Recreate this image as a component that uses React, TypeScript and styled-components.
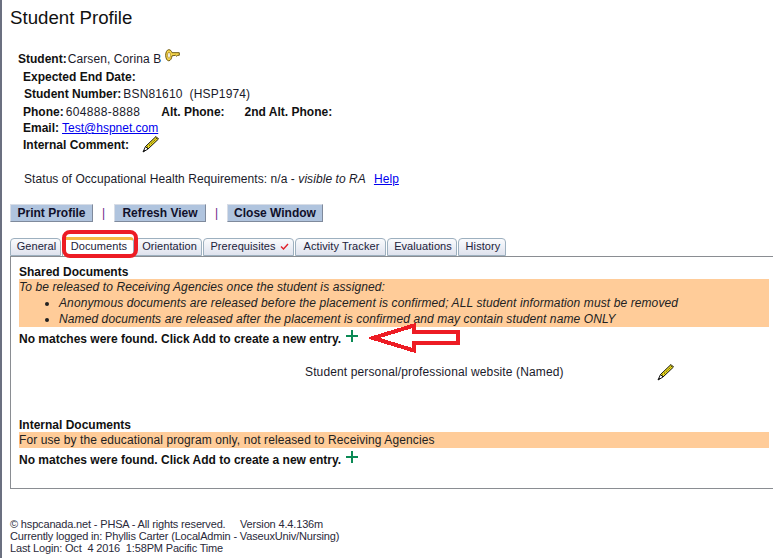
import React from 'react';
import styled, { createGlobalStyle } from 'styled-components';

const GlobalStyle = createGlobalStyle`
  html, body {
    margin: 0;
    padding: 0;
    background: #fff;
    overflow: hidden;
  }
  body {
    font-family: "Liberation Sans", Arial, sans-serif;
    font-size: 12px;
    color: #1a1a2a;
  }
`;

const Page = styled.div`
  width: 773px;
  height: 558px;
  border-left: 2px solid #6b7080;
  padding-left: 8px;
  box-sizing: border-box;
  overflow: hidden;
`;

const Title = styled.h1`
  margin: 0;
  padding-top: 7px;
  height: 36px;
  font-size: 18.67px;
  line-height: 21px;
  font-weight: 400;
  color: #111;
`;

const Info = styled.div`
  padding-top: 7px;
  display: flex;
  flex-direction: column;
`;

const InfoRow = styled.div<{ $indent: number; $height: number }>`
  height: ${(p) => p.$height}px;
  line-height: ${(p) => p.$height}px;
  padding-left: ${(p) => p.$indent}px;
  white-space: nowrap;
  display: flex;
  align-items: center;
`;

const Label = styled.b<{ $gap?: number; $after?: number }>`
  font-weight: 700;
  color: #111;
  margin-left: ${(p) => p.$gap ?? 0}px;
  margin-right: ${(p) => p.$after ?? 2}px;
`;

const Value = styled.span<{ $spacing: number }>`
  letter-spacing: ${(p) => p.$spacing}px;
`;

const Link = styled.a`
  color: #0000ee;
  text-decoration: underline;
`;

const KeySlot = styled.span`
  display: flex;
  margin: -9px 0 0 4px;
`;

const CommentPencil = styled.span`
  display: flex;
  margin: -2px 0 0 11px;
`;

const StatusRow = styled.div`
  margin-top: 15px;
  padding-left: 14px;
  height: 16px;
  line-height: 16px;
  white-space: nowrap;
  letter-spacing: 0.07px;
`;

const HelpLink = styled(Link)`
  margin-left: 8px;
`;

const Toolbar = styled.div`
  margin-top: 17px;
  display: flex;
  align-items: center;
  height: 18px;
`;

const ActionButton = styled.button<{ $width: number }>`
  width: ${(p) => p.$width}px;
  height: 18px;
  padding: 0 0 1px;
  border: 1px solid;
  border-color: #d8dde6 #7f8a9c #7f8a9c #d8dde6;
  background: #b0c4de;
  color: #10102a;
  font: 700 12px/14px "Liberation Sans", Arial, sans-serif;
`;

const Divider = styled.span`
  width: 21px;
  text-align: center;
  color: #6a1b8a;
  font-size: 12px;
`;

const TabBar = styled.div`
  margin-top: 15px;
  display: flex;
  align-items: flex-end;
  height: 19px;
  position: relative;
  z-index: 1;
`;

const Tab = styled.div<{ $width: number; $active?: boolean }>`
  width: ${(p) => p.$width}px;
  height: ${(p) => (p.$active ? 19 : 18)}px;
  box-sizing: border-box;
  margin-right: 1px;
  padding-left: 2px;
  border: 1px solid #9db0bf;
  border-bottom: ${(p) => (p.$active ? 'none' : '1px solid #9db0bf')};
  border-top: ${(p) => (p.$active ? '3px solid #f5b942' : '1px solid #9db0bf')};
  border-radius: 4px 4px 0 0;
  background: ${(p) => (p.$active ? '#fff' : 'linear-gradient(#fafbfd, #dfe3ee)')};
  font-size: 11px;
  letter-spacing: 0.08px;
  line-height: ${(p) => (p.$active ? 13 : 14)}px;
  text-align: center;
  white-space: nowrap;
  color: #22223a;
`;

const TabCheck = styled.svg`
  margin-left: 4px;
  vertical-align: 0;
`;

const TabRing = styled.div`
  position: absolute;
  left: 52px;
  top: -7px;
  width: 76px;
  height: 28px;
  box-sizing: border-box;
  border: 4px solid #ed1c24;
  border-radius: 8px;
`;

const Panel = styled.div`
  height: 233px;
  box-sizing: border-box;
  border: 1px solid #8a8d92;
  border-right: none;
  padding: 7px 0 0 8px;
  position: relative;
`;

const SectionTitle = styled.div`
  height: 15px;
  line-height: 17px;
  font-weight: 700;
  color: #111;
`;

const Notice = styled.div<{ $italic?: boolean }>`
  background: #ffcc99;
  margin-right: 4px;
  font-size: 12px;
  line-height: 16px;
  letter-spacing: 0.1px;
  color: #222;
  font-style: ${(p) => (p.$italic ? 'italic' : 'normal')};
`;

const NoticeList = styled.ul`
  margin: 0;
  padding: 0 0 0 40px;
`;

const EmptyRow = styled.div`
  height: 24px;
  display: flex;
  align-items: center;
  font-weight: 700;
  color: #111;
`;

const AddIcon = styled.svg`
  margin: -6px 0 0 5px;
`;

const DocRow = styled.div`
  margin-top: 9px;
  height: 24px;
  display: flex;
  align-items: center;
  padding-left: 286px;
`;

const DocName = styled.span`
  width: 352px;
  letter-spacing: 0.13px;
`;

const InternalSection = styled.div`
  margin-top: 33px;
`;

const ArrowLayer = styled.svg`
  position: absolute;
  left: 358px;
  top: 66px;
`;

const Footer = styled.footer`
  margin-top: 29px;
  font-size: 11px;
  line-height: 12px;
  letter-spacing: -0.16px;
  color: #2a2a3a;
  white-space: pre;
`;

const Pencil: React.FC = () => (
  <svg width="18" height="18" viewBox="0 0 18 18">
    <path d="M14 1.5 L16.5 4 L6 14 L3.5 11.5 Z" fill="#f4e21c" stroke="#111" strokeWidth="1" />
    <path d="M5 12.5 L15 3" stroke="#111" strokeWidth="1" strokeDasharray="1.5 1.5" />
    <path d="M3.5 11.5 L6 14 L1 17 Z" fill="#fff" stroke="#111" strokeWidth="1" />
    <path d="M1 17 L2.3 14.8 L3.4 15.8 Z" fill="#111" />
  </svg>
);

const KeyIcon: React.FC = () => (
  <svg width="15" height="13" viewBox="0 0 15 13">
    <path
      d="M3.8 0.7 C5.6 0.7 6.6 2.2 7 3.7 L14.3 3.7 L14.3 6.3 L12.6 6.3 L11.8 7.3 L10.6 6.3 L7 6.8 C6.6 9.4 5.6 11.8 3.8 11.8 C1.8 11.8 0.7 9 0.7 6.2 C0.7 3.4 1.8 0.7 3.8 0.7 Z"
      fill="#f6d64a"
      stroke="#6e5a10"
      strokeWidth="1"
    />
    <ellipse cx="4" cy="6.2" rx="1.4" ry="3" fill="#fff" stroke="#a88a20" strokeWidth="0.8" />
  </svg>
);

const Plus: React.FC = () => (
  <AddIcon width="12" height="12" viewBox="0 0 12 12">
    <path d="M6 0 V12 M0 6 H12" stroke="#0b8a55" strokeWidth="2" />
  </AddIcon>
);

const tabs = [
  { label: 'General', width: 51 },
  { label: 'Documents', width: 72, active: true },
  { label: 'Orientation', width: 67 },
  { label: 'Prerequisites', width: 91, check: true },
  { label: 'Activity Tracker', width: 91 },
  { label: 'Evaluations', width: 70 },
  { label: 'History', width: 48 },
];

const App: React.FC = () => {
  return (
    <Page>
      <GlobalStyle />
      <Title>Student Profile</Title>
      <Info>
        <InfoRow $indent={8} $height={19}>
          <Label $after={1}>Student:</Label>
          <Value $spacing={0.1}>Carsen, Corina B</Value>
          <KeySlot>
            <KeyIcon />
          </KeySlot>
        </InfoRow>
        <InfoRow $indent={13} $height={17}>
          <Label>Expected End Date:</Label>
        </InfoRow>
        <InfoRow $indent={14} $height={16}>
          <Label>Student Number:</Label>
          <Value $spacing={0.15}>BSN81610&nbsp;&nbsp;(HSP1974)</Value>
        </InfoRow>
        <InfoRow $indent={13} $height={20}>
          <Label>Phone:</Label>
          <Value $spacing={0.35}>604888-8888</Value>
          <Label $gap={21}>Alt. Phone:</Label>
          <Label $gap={18}>2nd Alt. Phone:</Label>
        </InfoRow>
        <InfoRow $indent={13} $height={12}>
          <Label $after={3}>Email:</Label>
          <Link href="#">Test@hspnet.com</Link>
        </InfoRow>
        <InfoRow $indent={13} $height={22}>
          <Label>Internal Comment:</Label>
          <CommentPencil>
            <Pencil />
          </CommentPencil>
        </InfoRow>
      </Info>
      <StatusRow>
        Status of Occupational Health Requirements: n/a - <i>visible to RA</i>
        <HelpLink href="#">Help</HelpLink>
      </StatusRow>
      <Toolbar>
        <ActionButton $width={83}>Print Profile</ActionButton>
        <Divider>|</Divider>
        <ActionButton $width={92}>Refresh View</ActionButton>
        <Divider>|</Divider>
        <ActionButton $width={96}>Close Window</ActionButton>
      </Toolbar>
      <TabBar>
        {tabs.map((t) => (
          <Tab key={t.label} $width={t.width} $active={t.active}>
            {t.label}
            {t.check && (
              <TabCheck width="9" height="7" viewBox="0 0 9 7">
                <path d="M1 3.5 L3.5 6 L8 1" fill="none" stroke="#e0202a" strokeWidth="1.4" />
              </TabCheck>
            )}
          </Tab>
        ))}
        <TabRing />
      </TabBar>
      <Panel>
        <SectionTitle>Shared Documents</SectionTitle>
        <Notice $italic>
          To be released to Receiving Agencies once the student is assigned:
          <NoticeList>
            <li>Anonymous documents are released before the placement is confirmed; ALL student information must be removed</li>
            <li>Named documents are released after the placement is confirmed and may contain student name ONLY</li>
          </NoticeList>
        </Notice>
        <EmptyRow>
          No matches were found. Click Add to create a new entry.
          <Plus />
        </EmptyRow>
        <DocRow>
          <DocName>Student personal/professional website (Named)</DocName>
          <Pencil />
        </DocRow>
        <InternalSection>
          <SectionTitle>Internal Documents</SectionTitle>
          <Notice>For use by the educational program only, not released to Receiving Agencies</Notice>
          <EmptyRow>
            No matches were found. Click Add to create a new entry.
            <Plus />
          </EmptyRow>
        </InternalSection>
        <ArrowLayer width="92" height="30" viewBox="0 0 92 30" shapeRendering="crispEdges">
          <path
            d="M4 15 L45 2.5 L45 9 L88.5 9 L88.5 19.5 L45 19.5 L45 27.5 Z"
            fill="#fff"
            stroke="#ed1c24"
            strokeWidth="4"
          />
        </ArrowLayer>
      </Panel>
      <Footer>
        {'© hspcanada.net - PHSA - All rights reserved.     Version 4.4.136m\n'}
        {'Currently logged in: Phyllis Carter (LocalAdmin - VaseuxUniv/Nursing)\n'}
        {'Last Login: Oct  4 2016  1:58PM Pacific Time'}
      </Footer>
    </Page>
  );
};

export default App;
